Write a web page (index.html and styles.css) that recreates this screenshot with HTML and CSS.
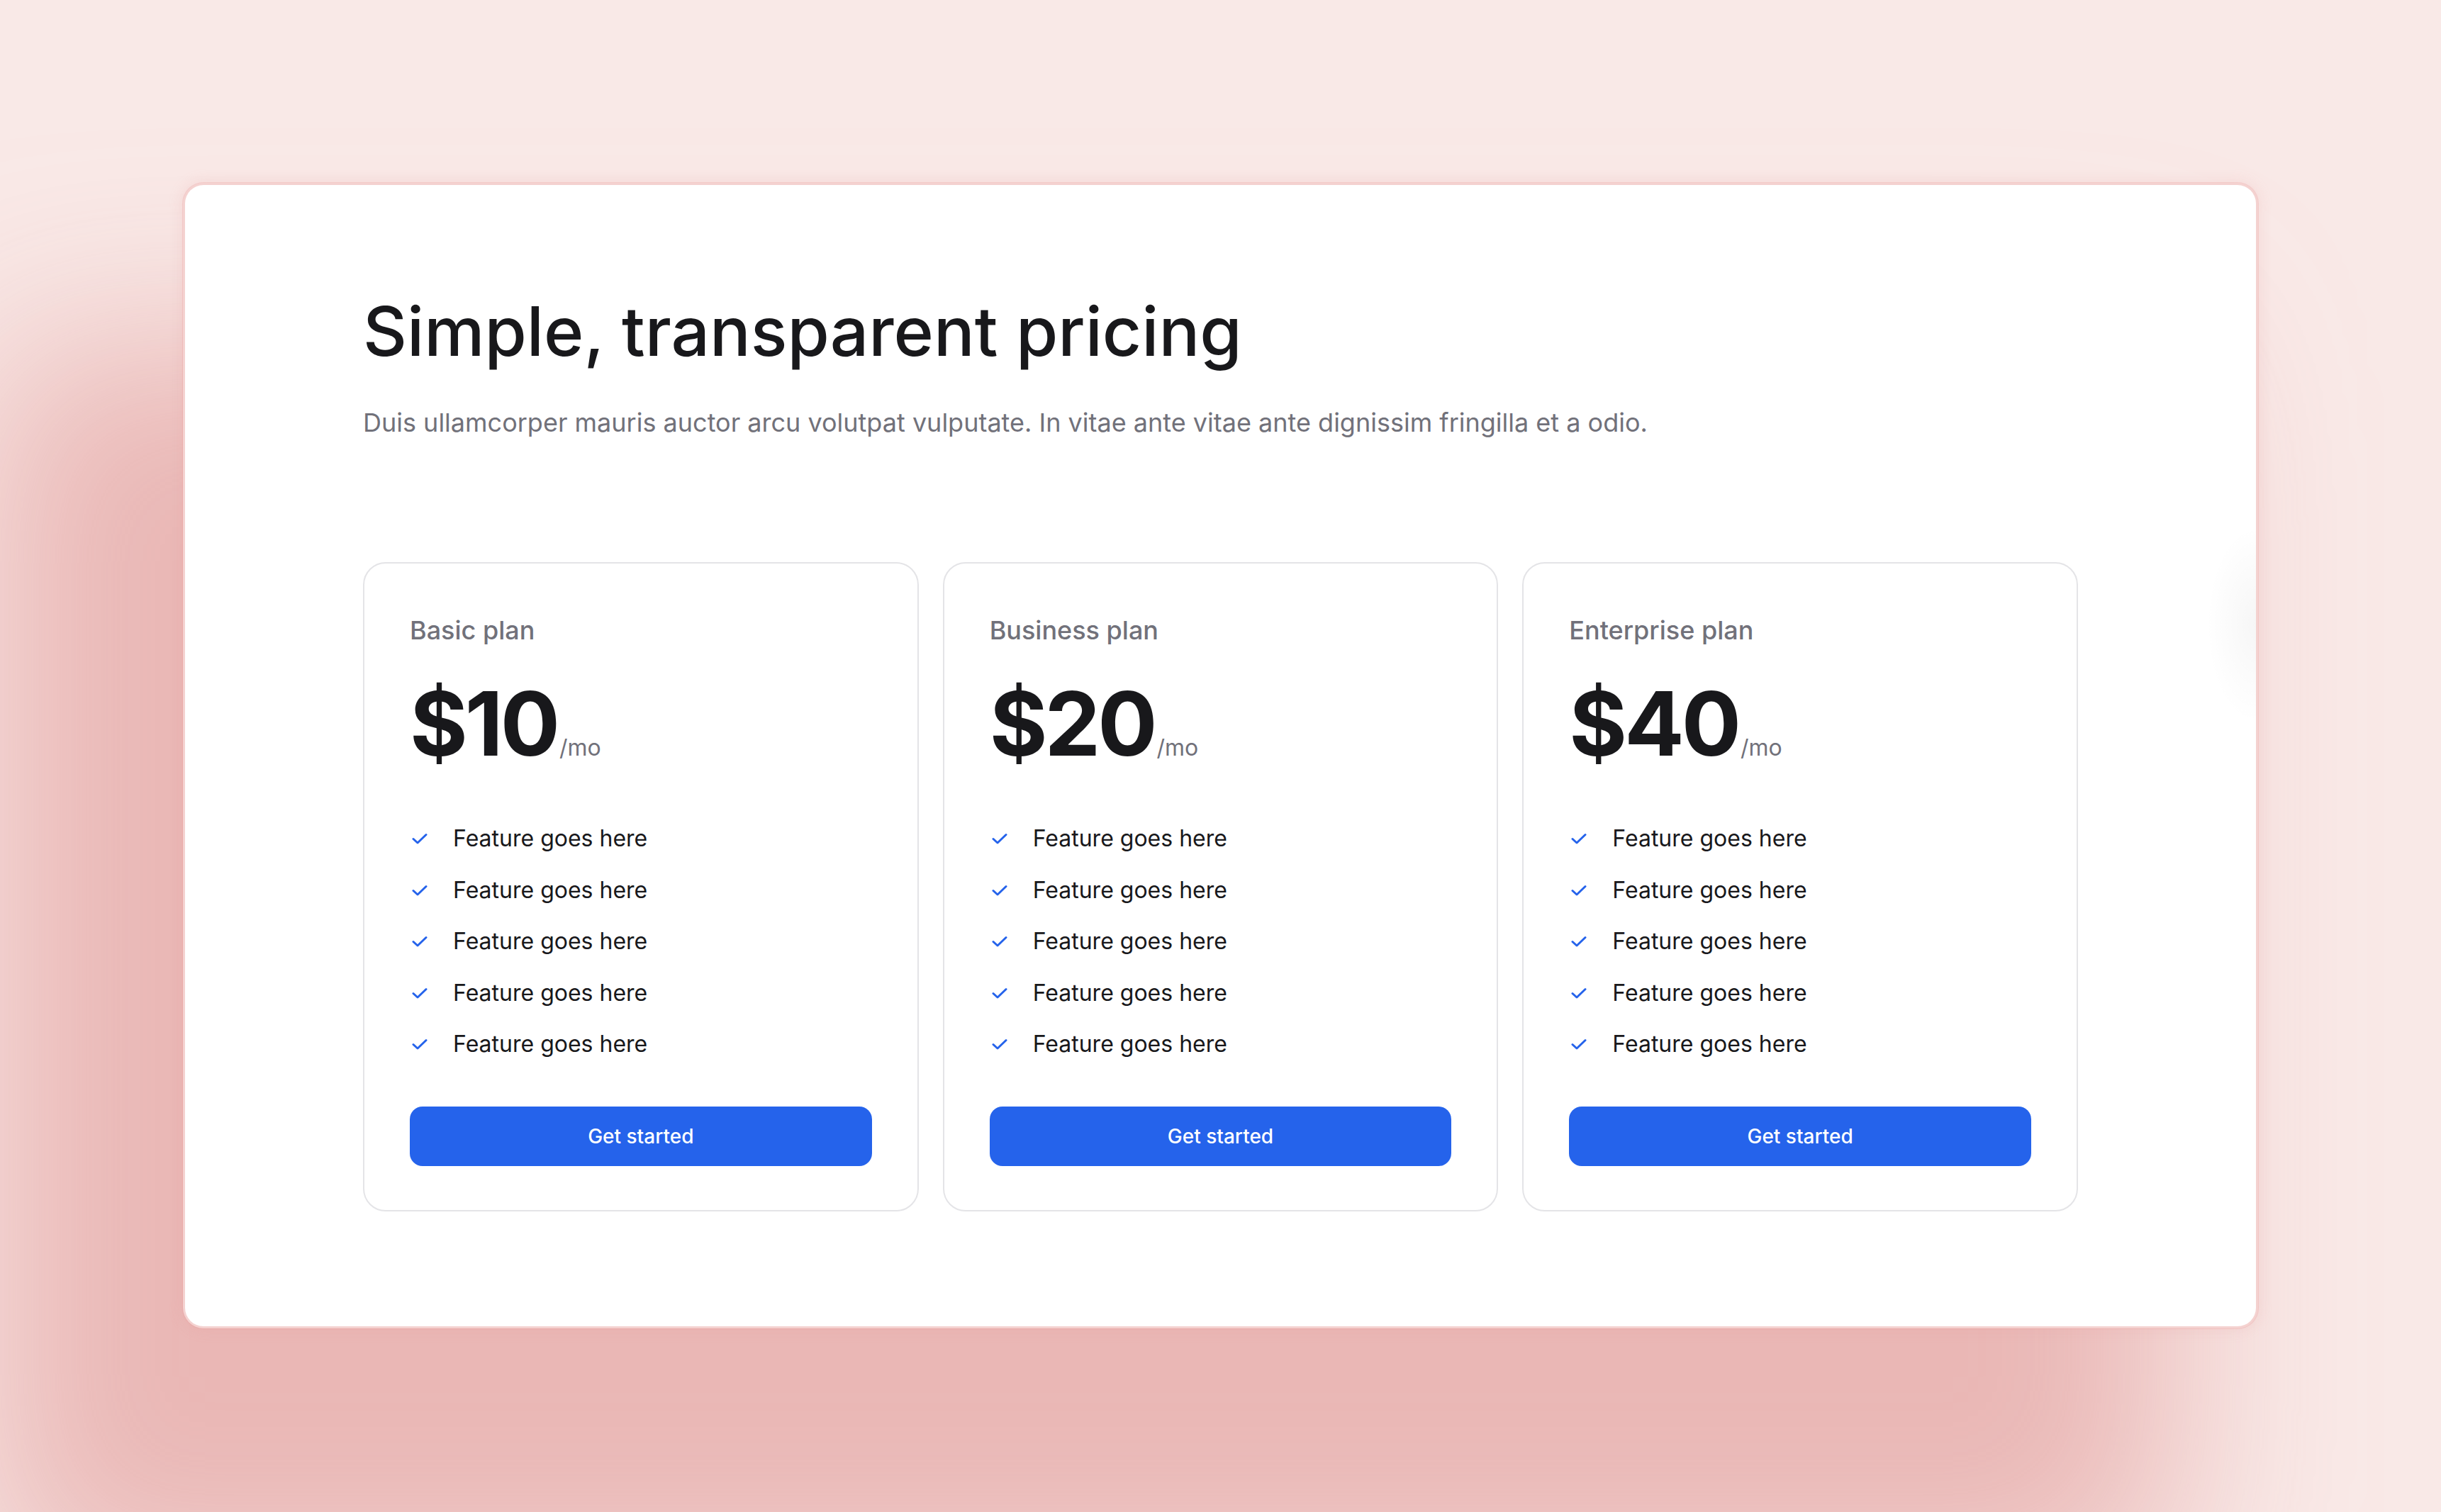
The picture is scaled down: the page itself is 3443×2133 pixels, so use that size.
FILE: index.html
```html
<!DOCTYPE html>
<html lang="en">
<head>
<meta charset="utf-8">
<title>Pricing</title>
<link rel="stylesheet" href="styles.css">
</head>
<body>
<div class="stage">
  <section class="panel">
    <h1 class="title">Simple, transparent pricing</h1>
    <p class="subtitle">Duis ullamcorper mauris auctor arcu volutpat vulputate. In vitae ante vitae ante dignissim fringilla et a odio.</p>
    <div class="plans">
      <div class="plan">
        <div class="plan-name">Basic plan</div>
        <div class="price"><span class="amount">$10</span><span class="per">/mo</span></div>
        <ul class="features">
          <li><svg class="check" viewBox="0 0 22 16"><path d="M2 8.5l6 5.5L20 2.5"/></svg>Feature goes here</li>
          <li><svg class="check" viewBox="0 0 22 16"><path d="M2 8.5l6 5.5L20 2.5"/></svg>Feature goes here</li>
          <li><svg class="check" viewBox="0 0 22 16"><path d="M2 8.5l6 5.5L20 2.5"/></svg>Feature goes here</li>
          <li><svg class="check" viewBox="0 0 22 16"><path d="M2 8.5l6 5.5L20 2.5"/></svg>Feature goes here</li>
          <li><svg class="check" viewBox="0 0 22 16"><path d="M2 8.5l6 5.5L20 2.5"/></svg>Feature goes here</li>
        </ul>
        <button class="cta">Get started</button>
      </div>
      <div class="plan">
        <div class="plan-name">Business plan</div>
        <div class="price"><span class="amount">$20</span><span class="per">/mo</span></div>
        <ul class="features">
          <li><svg class="check" viewBox="0 0 22 16"><path d="M2 8.5l6 5.5L20 2.5"/></svg>Feature goes here</li>
          <li><svg class="check" viewBox="0 0 22 16"><path d="M2 8.5l6 5.5L20 2.5"/></svg>Feature goes here</li>
          <li><svg class="check" viewBox="0 0 22 16"><path d="M2 8.5l6 5.5L20 2.5"/></svg>Feature goes here</li>
          <li><svg class="check" viewBox="0 0 22 16"><path d="M2 8.5l6 5.5L20 2.5"/></svg>Feature goes here</li>
          <li><svg class="check" viewBox="0 0 22 16"><path d="M2 8.5l6 5.5L20 2.5"/></svg>Feature goes here</li>
        </ul>
        <button class="cta">Get started</button>
      </div>
      <div class="plan">
        <div class="plan-name">Enterprise plan</div>
        <div class="price"><span class="amount">$40</span><span class="per">/mo</span></div>
        <ul class="features">
          <li><svg class="check" viewBox="0 0 22 16"><path d="M2 8.5l6 5.5L20 2.5"/></svg>Feature goes here</li>
          <li><svg class="check" viewBox="0 0 22 16"><path d="M2 8.5l6 5.5L20 2.5"/></svg>Feature goes here</li>
          <li><svg class="check" viewBox="0 0 22 16"><path d="M2 8.5l6 5.5L20 2.5"/></svg>Feature goes here</li>
          <li><svg class="check" viewBox="0 0 22 16"><path d="M2 8.5l6 5.5L20 2.5"/></svg>Feature goes here</li>
          <li><svg class="check" viewBox="0 0 22 16"><path d="M2 8.5l6 5.5L20 2.5"/></svg>Feature goes here</li>
        </ul>
        <button class="cta">Get started</button>
      </div>
    </div>
  </section>
</div>
</body>
</html>
```

FILE: styles.css
```css
* { box-sizing: border-box; }

html, body {
  margin: 0;
  padding: 0;
}

body {
  width: 3443px;
  height: 2133px;
  overflow: hidden;
  background: #f9e9e7;
  font-family: Inter, "Noto Sans", "Liberation Sans", sans-serif;
  color: #18181b;
}

.stage {
  padding: 257px 257px 0 257px;
}

.panel {
  width: 2929px;
  height: 1618px;
  background-color: #ffffff;
  background-image: radial-gradient(70px 140px at 100% 620px, rgba(0, 0, 0, 0.035), rgba(0, 0, 0, 0));
  background-clip: padding-box;
  border: 4px solid rgba(232, 150, 150, 0.28);
  border-radius: 30px;
  padding: 148px 251px 0 251px;
  box-shadow:
    0 0 20px rgba(230, 150, 150, 0.2),
    -200px 300px 300px 70px rgba(224, 150, 148, 0.6);
}

.title {
  margin: 0;
  font-size: 96px;
  line-height: 116px;
  font-weight: 500;
  letter-spacing: 0;
  color: #18181b;
}

.subtitle {
  margin: 50px 0 0 0;
  font-size: 36px;
  line-height: 43px;
  font-weight: 400;
  color: #71717a;
}

.plans {
  margin-top: 175px;
  display: grid;
  grid-template-columns: repeat(3, 1fr);
  gap: 34px;
}

.plan {
  border: 2px solid #e4e4e7;
  border-radius: 32px;
  padding: 72px 64px 62px 64px;
  display: flex;
  flex-direction: column;
}

.plan-name {
  font-size: 36px;
  line-height: 44px;
  font-weight: 500;
  color: #71717a;
}

.price {
  margin-top: 47px;
  display: flex;
  align-items: baseline;
  line-height: 1;
}

.amount {
  font-size: 125px;
  font-weight: 700;
  letter-spacing: -4px;
  color: #18181b;
}

.per {
  margin-left: 3px;
  font-size: 32px;
  font-weight: 400;
  color: #71717a;
}

.features {
  list-style: none;
  margin: 76px 0 0 0;
  padding: 0;
  display: flex;
  flex-direction: column;
  gap: 24.5px;
}

.features li {
  display: flex;
  align-items: center;
  font-size: 32px;
  line-height: 48px;
  font-weight: 400;
  color: #18181b;
}

.check {
  width: 22px;
  height: 16px;
  margin: 0 36px 0 3px;
  fill: none;
  stroke: #2563eb;
  stroke-width: 3;
  stroke-linecap: round;
  stroke-linejoin: round;
  flex: none;
}

.cta {
  margin-top: 64px;
  height: 84px;
  width: 100%;
  border: none;
  border-radius: 18px;
  background: #2563eb;
  color: #ffffff;
  font-family: Inter, "Noto Sans", "Liberation Sans", sans-serif;
  font-size: 28px;
  font-weight: 500;
  cursor: pointer;
}
```
